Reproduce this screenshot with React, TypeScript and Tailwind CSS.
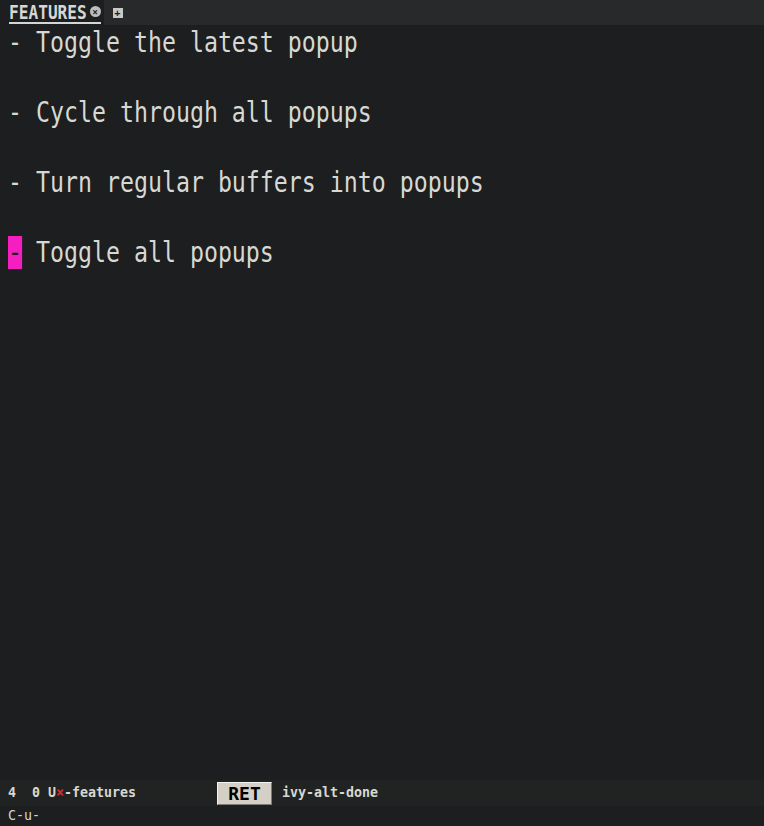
import React from 'react';

const MONO = "font-['DejaVu_Sans_Mono','Liberation_Mono',monospace]";

const LINES = [
    'Toggle the latest popup',
    '',
    'Cycle through all popups',
    '',
    'Turn regular buffers into popups',
    '',
    'Toggle all popups',
];

const TabBar = () => (
    <div className="flex h-[25px] items-stretch bg-[#27292b]">
        <div className="flex items-center bg-[#1c1e1f] pl-[9px] pr-[3px]">
            <div className="flex items-center gap-[3px] border-b-2 border-[#d6d6d4]">
                <span className={`${MONO} text-[19px] leading-[20px] font-bold text-[#d6d6d4] inline-block scale-x-[0.85] origin-left -mr-[14px]`}>
                    FEATURES
                </span>
                <span className="flex h-[11px] w-[11px] items-center justify-center rounded-full bg-[#bdbdbd] text-[10px] leading-none font-bold text-[#1c1e1f]">
                    ×
                </span>
            </div>
        </div>
        <div className="flex items-center pl-[9px]">
            <span className="flex h-[10px] w-[10px] items-center justify-center bg-[#c8c8c8] text-[11px] leading-none font-bold text-[#1c1e1f]">
                +
            </span>
        </div>
    </div>
);

const Buffer = () => (
    <div className="flex-1 pl-[8px]">
        {LINES.map((text, i) => {
            const isLast = i === LINES.length - 1;
            return (
                <div key={i} className="flex h-[35px] items-center">
                    {text && (
                        <div className={`${MONO} whitespace-pre text-[28px] leading-[35px] text-[#d8d8d2] scale-x-[0.83] origin-left`}>
                            {isLast ? (
                                <span className="bg-[#f51ec1] text-[#1c1e1f]">-</span>
                            ) : (
                                '-'
                            )}
                            {' ' + text}
                        </div>
                    )}
                </div>
            );
        })}
    </div>
);

const ModeLine = () => (
    <div className={`${MONO} flex h-[26px] items-center bg-[#212322] pl-[8px] text-[13.3px] font-bold text-[#d8d8d2] whitespace-pre`}>
        <span className="w-[209px]">
            {'4  0 U'}
            <span className="text-[#e0242a]">×</span>
            {'-features'}
        </span>
        <span className="flex h-[23px] w-[55px] items-center justify-center border border-t-[#f4f2ee] border-l-[#f4f2ee] border-r-[#7c7a74] border-b-[#7c7a74] bg-[#d4d0c5] text-[18px] text-black">
            RET
        </span>
        <span className="pl-[10px]">ivy-alt-done</span>
    </div>
);

export default function App() {
    return (
        <div className="flex h-[826px] w-[764px] flex-col overflow-hidden bg-[#1c1e1f]">
            <TabBar />
            <Buffer />
            <ModeLine />
            <div className={`${MONO} flex h-[20px] items-center pl-[8px] text-[13.3px] text-[#d8d8d2]`}>
                C-u-
            </div>
        </div>
    );
}
